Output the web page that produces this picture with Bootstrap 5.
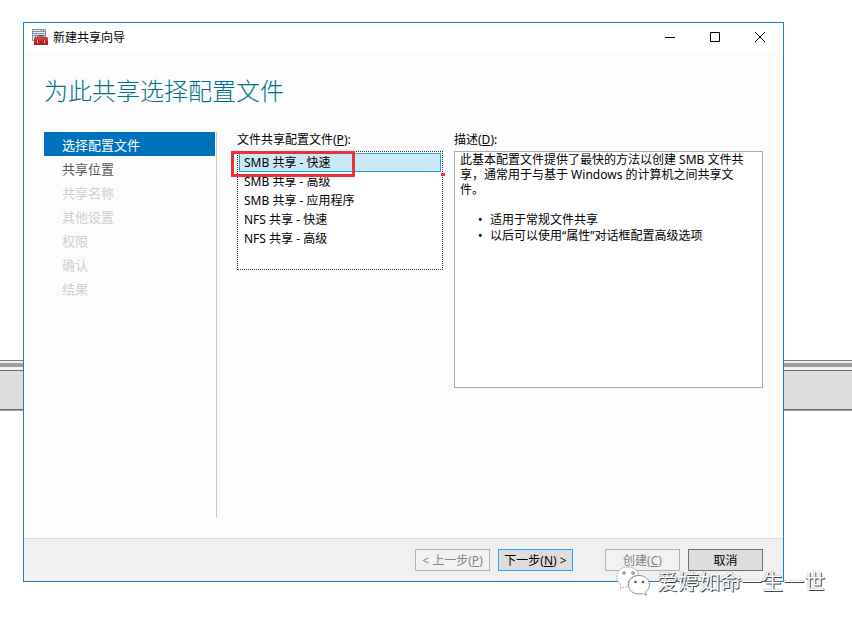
<!DOCTYPE html>
<html lang="zh-CN">
<head>
<meta charset="utf-8">
<meta name="viewport" content="width=device-width, initial-scale=1">
<title>新建共享向导</title>
<link href="https://cdn.jsdelivr.net/npm/bootstrap@5.3.0/dist/css/bootstrap.min.css" rel="stylesheet">
<style>
  body { font-family: "Noto Sans", "Noto Sans CJK SC", sans-serif; font-size: 12px; line-height: 15px; color: #000; background: #fff; }
  .desktop { min-height: 100vh; padding: 22px 68px 38px 23px; }
  .backdrop-window { top: 360px; z-index: -1; height: 51px; background: #dcdcdc; border-top: 1px solid #80808e; border-bottom: 1px solid #a0a0a0; }
  .backdrop-window::before { content: ""; display: block; height: 10px; background: #f2f4f0; border-top: 2px solid #eeeef6; border-bottom: 1px solid #6c6c6c; box-shadow: inset 0 4px #a0a0a0; }
  .backdrop-window::after { content: ""; display: block; height: 39px; border-bottom: 1px solid #6c6c6c; }
  .wizard { background: #fcfcfc; border: 1px solid #1a7fc6; }
  .titlebar { height: 30px; background: #fff; padding: 0 1px 2px 8px; }
  .caption-btn { width: 45px; height: 28px; border: 0; background: transparent; padding: 0; }
  .caption-btn svg { display: block; margin: auto; }
  .wizard-title { font-size: 24px; line-height: 36px; font-weight: 300; color: #00708f; padding: 20px 20px 22px; }
  .wizard-main { padding: 1px 20px 20px; gap: 20px; }
  .steps { width: 173px; min-height: 386px; border-right: 1px solid #c8c8c8; padding-right: 1px; }
  .steps .nav-link { font-size: 13px; line-height: 22px; padding: 2px 18px 0; color: #555; border-radius: 0; }
  .steps .nav-link.disabled { color: #d0d0d0; }
  .steps .nav-link.active { background: #0072bc; color: #fff; }
  .fields { gap: 11px; }
  .profile-col { width: 206px; }
  .field-label { line-height: 15px; margin-bottom: 4px; }
  .profile-list { border: 1px dotted #333; border-radius: 0; background: #fff; padding: 1px; min-height: 119px; }
  .profile-list .list-group-item { border: 1px solid transparent; border-radius: 0; padding: 0 4px; line-height: 17px; color: #000; background: transparent; margin: 0; }
  .profile-list .list-group-item.active { background: #cbe8f6; border-color: #26a0da; }
  .highlight-frame { left: -6px; top: 0; width: 124px; height: 26px; border: 3px solid #ed3237; z-index: 3; pointer-events: none; }
  .highlight-dot { right: -2px; top: 22px; width: 4px; height: 3px; background: #ed3237; z-index: 3; }
  .description { background: #fff; border: 1px solid #abadb3; min-height: 237px; padding: 0 5px; }
  .description ul { list-style: none; padding-left: 18px; margin: 15px 0 0; line-height: 16px; }
  .description li::before { content: "•"; display: inline-block; width: 12px; }
  .wizard-footer { background: #f0f0f0; border-top: 1px solid #dfdfdf; padding: 10px 20px; gap: 8px; }
  .dialog-btn { width: 75px; height: 22px; padding: 1px 0 0; font-size: 12px; line-height: 19px; border: 1px solid #707070; border-radius: 0; background: #ddd; color: #000; white-space: nowrap; }
  .dialog-btn:disabled { background: #f2f2f2; border-color: #adb2b5; color: #838383; opacity: 1; }
  .dialog-btn.default-action { border-color: #3399ff; }
  .signature { left: 616px; top: 565px; gap: 6px; font-size: 21px; line-height: 32px; color: #fff; z-index: 5; white-space: nowrap; text-shadow: 1px 1px 0 #444, 0 0 1px #777; pointer-events: none; }
</style>
<script src="https://cdn.jsdelivr.net/npm/bootstrap@5.3.0/dist/js/bootstrap.bundle.min.js"></script>
</head>
<body>
<div class="desktop position-relative d-flex flex-column">
  <div class="backdrop-window position-absolute start-0 w-100" aria-hidden="true"></div>
  <main class="wizard flex-grow-1 d-flex flex-column">
    <header class="titlebar d-flex align-items-center">
      <svg width="17" height="17" viewBox="0 0 17 17" aria-hidden="true">
        <path fill="#8294a1" d="M0 0h14v12H0z"/>
        <path fill="#e4eaee" d="M1 1h8v1H1zM10 1h1v1h-1zM12 1h1v1h-1zM1 3h12v1H1zM1 5h3v1H1zM5 5h8v1H5zM1 7h2v4H1zM4 7h2v1H4zM11 7h2v1h-2z"/>
        <path fill="none" stroke="#444" d="M5.500 9V7.500l1-1h4l1 1V9"/>
        <path fill="#d63a35" d="M3 8h12l1 1v3H2V9z"/>
        <path fill="#b8201f" d="M2 12h14v4H2z"/>
        <path fill="#7b1515" d="M4 11h3v1H4zM11 11h3v1h-3z"/>
        <path fill="#ccc" d="M5 11h1v3H5zM12 11h1v3h-1z"/>
      </svg>
      <span class="ms-1 flex-grow-1">新建共享向导</span>
      <button class="caption-btn" type="button" aria-label="最小化"><svg width="10" height="10"><path d="M0 5.500h10" stroke="#000"/></svg></button>
      <button class="caption-btn" type="button" aria-label="最大化"><svg width="10" height="10"><path d="M.5.5h9v9h-9z" fill="none" stroke="#000"/></svg></button>
      <button class="caption-btn" type="button" aria-label="关闭"><svg width="10" height="10"><path d="M0 0l10 10M10 0L0 10" stroke="#000"/></svg></button>
    </header>
    <h1 class="wizard-title m-0">为此共享选择配置文件</h1>
    <div class="wizard-main d-flex flex-grow-1">
      <nav class="steps nav nav-pills flex-column flex-nowrap flex-shrink-0" aria-label="步骤">
        <a class="nav-link active" href="#" aria-current="step">选择配置文件</a>
        <a class="nav-link" href="#">共享位置</a>
        <a class="nav-link disabled" href="#" aria-disabled="true">共享名称</a>
        <a class="nav-link disabled" href="#" aria-disabled="true">其他设置</a>
        <a class="nav-link disabled" href="#" aria-disabled="true">权限</a>
        <a class="nav-link disabled" href="#" aria-disabled="true">确认</a>
        <a class="nav-link disabled" href="#" aria-disabled="true">结果</a>
      </nav>
      <div class="fields d-flex flex-grow-1 align-items-start">
        <section class="profile-col flex-shrink-0">
          <div class="field-label" id="profile-label">文件共享配置文件(<u>P</u>):</div>
          <div class="position-relative">
            <div class="profile-list list-group" role="listbox" aria-labelledby="profile-label">
              <button type="button" class="list-group-item text-start active" role="option" aria-selected="true">SMB 共享 - 快速</button>
              <button type="button" class="list-group-item text-start" role="option">SMB 共享 - 高级</button>
              <button type="button" class="list-group-item text-start" role="option">SMB 共享 - 应用程序</button>
              <button type="button" class="list-group-item text-start" role="option">NFS 共享 - 快速</button>
              <button type="button" class="list-group-item text-start" role="option">NFS 共享 - 高级</button>
            </div>
            <div class="highlight-frame position-absolute"></div>
            <div class="highlight-dot position-absolute"></div>
          </div>
        </section>
        <section class="flex-grow-1">
          <div class="field-label" id="desc-label">描述(<u>D</u>):</div>
          <div class="description" role="region" aria-labelledby="desc-label">
            <p class="m-0">此基本配置文件提供了最快的方法以创建 SMB 文件共享，通常用于与基于 Windows 的计算机之间共享文件。</p>
            <ul>
              <li>适用于常规文件共享</li>
              <li>以后可以使用“属性”对话框配置高级选项</li>
            </ul>
          </div>
        </section>
      </div>
    </div>
    <footer class="wizard-footer d-flex justify-content-end">
      <button class="btn dialog-btn" type="button" disabled>&lt; 上一步(<u>P</u>)</button>
      <button class="btn dialog-btn default-action me-4" type="button">下一步(<u>N</u>) &gt;</button>
      <button class="btn dialog-btn" type="button" disabled>创建(<u>C</u>)</button>
      <button class="btn dialog-btn" type="button">取消</button>
    </footer>
  </main>
  <div class="signature position-absolute d-flex align-items-center">
    <svg width="35" height="32" viewBox="0 -1 35 32" aria-hidden="true">
      <g fill="#fff" stroke="#999" stroke-width=".8" stroke-dasharray="2 1">
        <path d="M12 1C5 1 .8 5.500.8 11c0 3 1.500 6 4.200 8l-1 4 4.500-2.300c1.500.4 2.500.5 4 .5"/>
        <path d="M12 1c6 0 10 3.500 11 8-6 .3-11 4-11 9.500 0 1 .1 2 .5 2.700"/>
      </g>
      <path fill="#fff" stroke="#777" stroke-width=".8" d="M23 9.500c-6 0-10.500 4-10.500 9.300S17 28 23 28c1.200 0 2.300-.2 3.500-.5l4 1.800-1-3.300c2.500-1.800 4-4.300 4-7.200 0-5.300-4.500-9.300-10.500-9.300z"/>
      <g fill="#fff" stroke="#777"><circle cx="8" cy="7" r="1.300"/><circle cx="17" cy="7" r="1.300"/></g>
      <g fill="#555"><circle cx="19.500" cy="16" r="1.300"/><circle cx="27" cy="16" r="1.300"/></g>
    </svg>
    <span>爱婷如命一生一世</span>
  </div>
</div>
</body>
</html>
